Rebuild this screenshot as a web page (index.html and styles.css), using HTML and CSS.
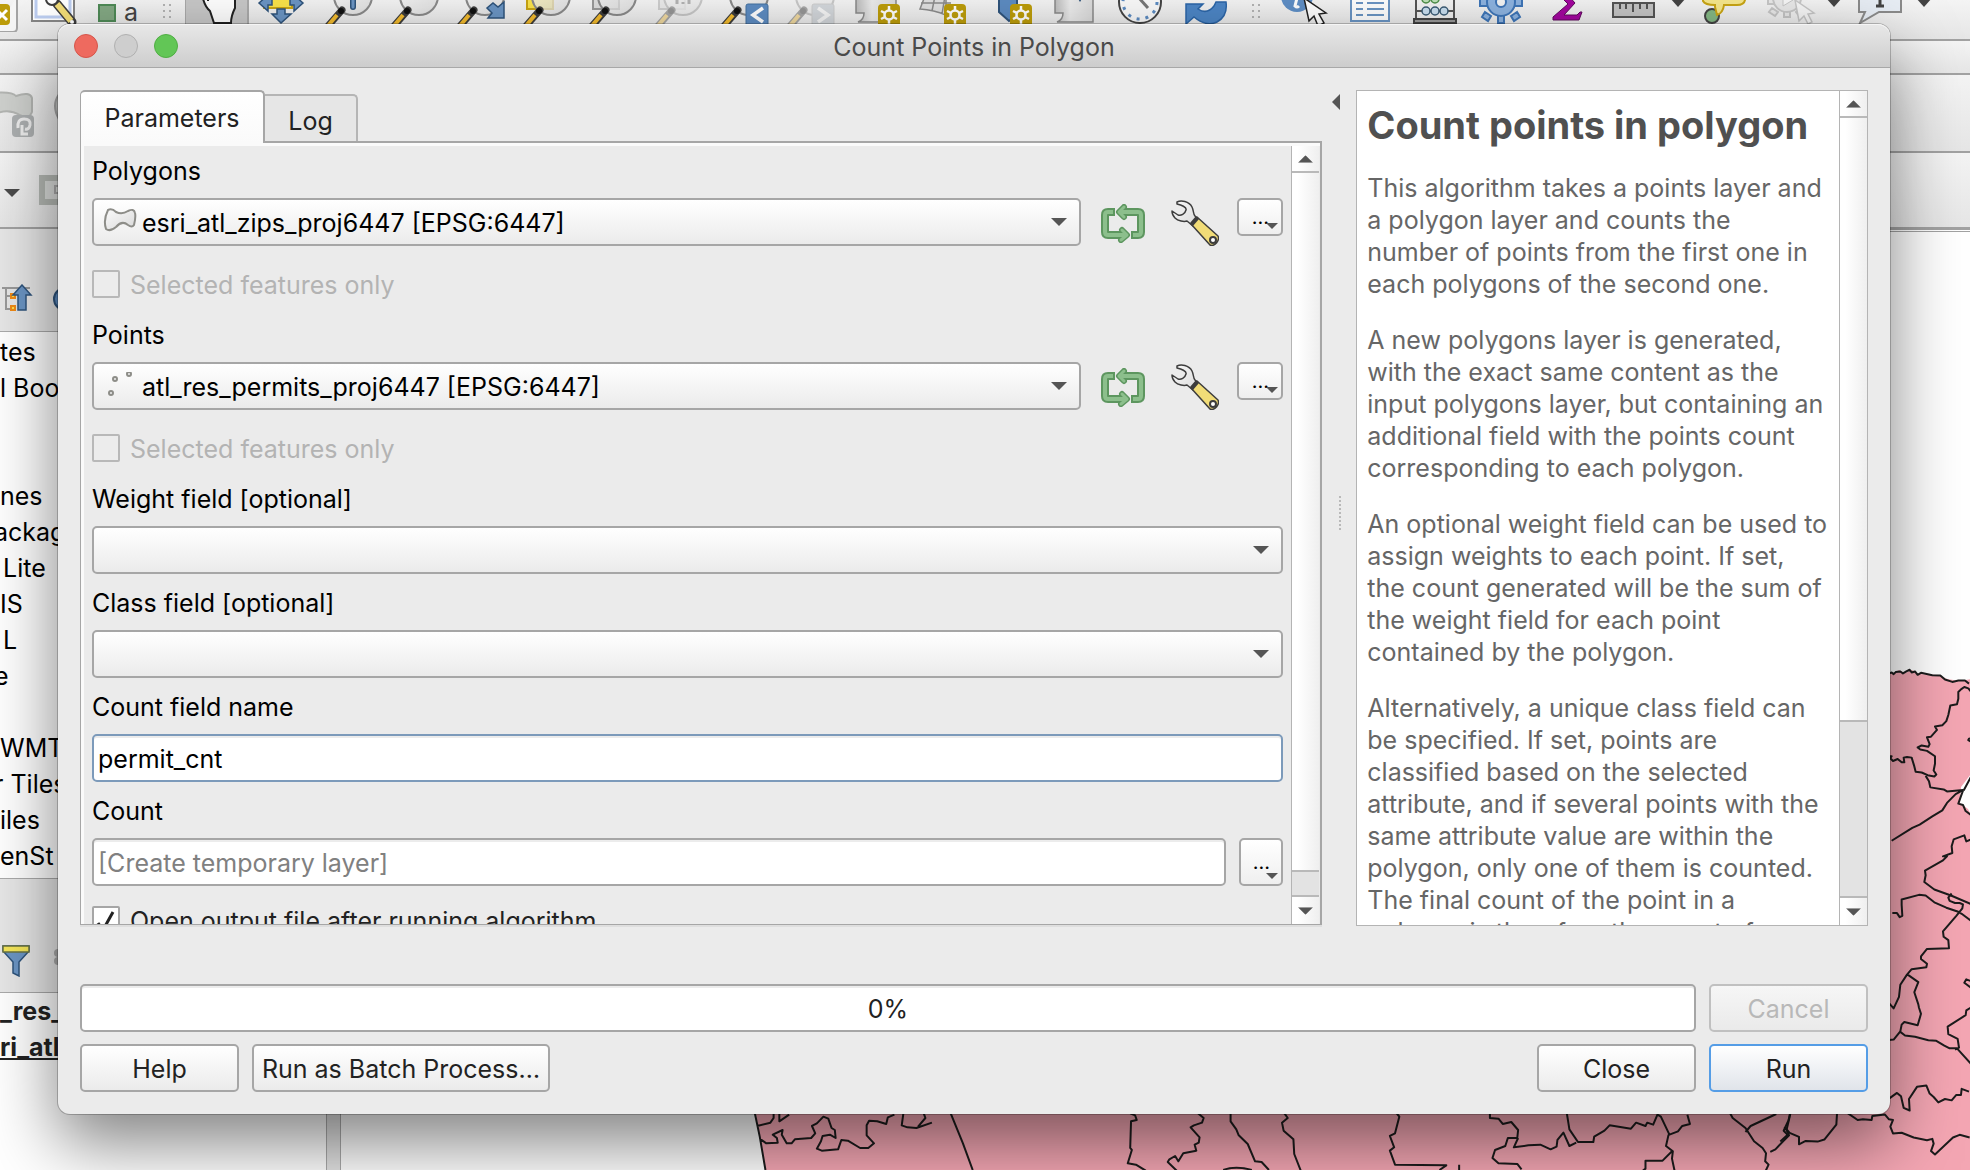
FILE: index.html
```html
<!DOCTYPE html>
<html lang="en">
<head>
<meta charset="utf-8">
<title>Count Points in Polygon</title>
<link rel="stylesheet" href="styles.css">
</head>
<body>
<svg class="defs" aria-hidden="true">
  <defs>
    <linearGradient id="glass" x1="0" y1="0" x2="1" y2="1"><stop offset="0" stop-color="#fafafa"/><stop offset="1" stop-color="#d9d9d9"/></linearGradient>
    <linearGradient id="paper" x1="0" y1="0" x2="1" y2="0"><stop offset="0" stop-color="#bdbdbd"/><stop offset=".4" stop-color="#ececec"/><stop offset="1" stop-color="#dadada"/></linearGradient>
    <symbol id="lens" viewBox="0 0 66 24">
      <circle cx="38" cy="-4" r="19" fill="url(#glass)" fill-opacity=".75" stroke="#8a8a8a" stroke-width="2"/>
      <path d="M13 26L27 10" stroke="#3d3d3d" stroke-width="7" stroke-linecap="round"/>
      <path d="M12 27L22 15" stroke="#f3bb2e" stroke-width="4"/>
      <circle cx="26" cy="11" r="3" fill="#111"/>
    </symbol>
    <symbol id="badge" viewBox="0 0 22 20">
      <rect width="22" height="26" rx="4" fill="#bd9d0a"/>
      <path d="M11 2v18M3 7l16 8M3 15l16-8" stroke="#fff" stroke-width="2.5"/>
      <circle cx="11" cy="11" r="4.5" fill="#bd9d0a" stroke="#fff" stroke-width="2.5"/>
    </symbol>
    <symbol id="wrench" viewBox="0 0 48 46">
      <path d="M6 2C10 0 18 1 21 7c2 4 1 7 3 9l4 5-6 5-6-5c-3 1-9 0-12-3-2-2-3-5-3-7l6 4c3 1 7-1 8-5C16 7 10 5 6 4z" fill="url(#glass)" stroke="#3d3d3d" stroke-width="1.5" stroke-linejoin="round"/>
      <path d="M20 24l6-7 21 19c2 4-3 11-8 9z" fill="#f1dc77" stroke="#3d3d3d" stroke-width="1.5" stroke-linejoin="round"/>
      <path d="M19 23l6-7 3 3-6 7z" fill="#3d3d3d"/>
      <circle cx="42" cy="40" r="3" fill="#fff" stroke="#3d3d3d" stroke-width="2"/>
    </symbol>
    <symbol id="iterate" viewBox="0 0 44 39">
      <g fill="none" stroke-linejoin="round" stroke-linecap="round">
        <path d="M14 8H7q-3 0-3 3v17q0 3 3 3h15M30 31h7q3 0 3-3V11q0-3-3-3H22" stroke="#5d965f" stroke-width="8" stroke-linecap="butt"/>
        <path d="M21 26l5 5-6 5M23 3l-5 5 5 5" stroke="#5d965f" stroke-width="6"/>
        <path d="M12 8H7q-3 0-3 3v17q0 3 3 3h17M32 31h5q3 0 3-3V11q0-3-3-3H20" stroke="#8cbf8c" stroke-width="4" stroke-linecap="butt"/>
        <path d="M21 26l5 5-6 5M23 3l-5 5 5 5" stroke="#8cbf8c" stroke-width="3"/>
      </g>
    </symbol>
    <symbol id="down" viewBox="0 0 16 8"><path d="M0 0h16L8 8z" fill="#555"/></symbol>
    <symbol id="up" viewBox="0 0 16 8"><path d="M0 8h16L8 0z" fill="#555"/></symbol>
    <symbol id="grip" viewBox="0 0 30 24"><path d="M14 4v16M20 4v16" stroke="#b4b4b4" stroke-width="2" stroke-dasharray="2 4"/></symbol>
  </defs>
</svg>

<div class="app">
  <div class="toolbar toolbar-main">
    <svg class="w22" viewBox="0 0 22 32"><path d="M-4 32h17q4 0 4-4V-4" fill="#f6f6f6" stroke="#a5a5a5" stroke-width="2"/><rect x="-12" y="4" width="22" height="21" rx="4" fill="#bd9d0a"/><path d="M-3 10l10 10M7 10L-3 20" stroke="#fff" stroke-width="3"/></svg>
    <svg class="w66" viewBox="0 0 66 24"><path d="M10-4h42v25H10z" fill="#fff" stroke="#858585" stroke-width="2"/><path d="M14-4v21h34V-4" fill="#fff" stroke="#bccdf0" stroke-width="3"/><path d="M35 4L50 22" stroke="#3d3d3d" stroke-width="9" stroke-linecap="round"/><path d="M35 4L49 21" stroke="#f1dc77" stroke-width="6"/><circle cx="30" cy="-1" r="6" fill="#fff" stroke="#3d3d3d" stroke-width="2"/><circle cx="50" cy="22" r="2" fill="#fff"/></svg>
    <span class="style-sample"><i></i><b>a</b></span>
    <svg class="w35" viewBox="0 0 35 24"><use href="#grip" width="30" height="24"/></svg>
    <span class="pressed"><svg class="w62" viewBox="0 0 62 24"><path d="M16-6q2 12 8 17l4 12h17q0-7 4-15V-6z" fill="#fff" stroke="#222" stroke-width="2"/><path d="M22-2v3" stroke="#222" stroke-width="2"/></svg></span>
    <svg class="w66" viewBox="0 0 66 24"><path d="M15-4h28V8H15z" fill="#fae34a" stroke="#c9a514" stroke-width="2"/><path d="M10 3l9-8v4h4v6h-4v6zM54 3l-9-8v4h-4v6h4v6zM32 23l-9-9h5V9h8v5h6z" fill="#6b95c4" stroke="#2f547c" stroke-width="1.5"/></svg>
    <svg class="w66" viewBox="0 0 66 24"><use href="#lens" width="66" height="24"/><path d="M38-4V7" stroke="#2f547c" stroke-width="6" stroke-linecap="round"/><path d="M38-4V7" stroke="#6b95c4" stroke-width="3" stroke-linecap="round"/></svg>
    <svg class="w66" viewBox="0 0 66 24"><use href="#lens" width="66" height="24"/></svg>
    <svg class="w66" viewBox="0 0 66 24"><use href="#lens" width="66" height="24"/><path d="M57 2v16H41l4-5-5-5 6-5 5 4z" fill="#6b95c4" stroke="#2f547c" stroke-width="1.5"/></svg>
    <svg class="w66" viewBox="0 0 66 24"><path d="M14-4h26V9H14z" fill="#fae34a" stroke="#c9a514" stroke-width="2"/><use href="#lens" width="66" height="24"/></svg>
    <svg class="w66" viewBox="0 0 66 24"><path d="M14-4h26V9H14z" fill="#ddd" stroke="#999" stroke-width="2"/><use href="#lens" width="66" height="24"/></svg>
    <svg class="w66 dim" viewBox="0 0 66 24"><path d="M14-4h26V9H14z" fill="#ddd" stroke="#999" stroke-width="2"/><use href="#lens" width="66" height="24"/><path d="M32 0v4M38 2v2M44-2v6" stroke="#555" stroke-width="3"/></svg>
    <svg class="w66" viewBox="0 0 66 24"><use href="#lens" width="66" height="24"/><rect x="35" y="4" width="22" height="24" rx="2" fill="#5d8cc2" stroke="#44719f"/><path d="M52 8l-10 7 10 7" fill="none" stroke="#fff" stroke-width="3.5"/></svg>
    <svg class="w66 dim" viewBox="0 0 66 24"><use href="#lens" width="66" height="24"/><rect x="35" y="4" width="22" height="24" rx="2" fill="#a9b3bd" stroke="#999"/><path d="M41 8l10 7-10 7" fill="none" stroke="#fff" stroke-width="3.5"/></svg>
    <svg class="w66" viewBox="0 0 66 24"><path d="M13-4h40v26H15q6-2 6-9h-8z" fill="url(#paper)" stroke="#8b8b8b" stroke-width="1.5"/><use href="#badge" x="35" y="4" width="22" height="20"/></svg>
    <svg class="w66" viewBox="0 0 66 24"><path d="M16-4L11 9q14 1 26 6V-4zM12 3h30M26-4l-3 15M36-4l-3 18" fill="#e0e0e0" stroke="#8b8b8b" stroke-width="1.5"/><use href="#badge" x="35" y="4" width="22" height="20"/></svg>
    <svg class="w66" viewBox="0 0 66 24"><path d="M24-4h18v19l-8 6-10-9z" fill="#5d8cc2" stroke="#2f547c" stroke-width="2"/><use href="#badge" x="35" y="4" width="22" height="20"/></svg>
    <svg class="w66" viewBox="0 0 66 24"><path d="M14-4h38v26H16q6-2 6-9h-8z" fill="url(#paper)" stroke="#8b8b8b" stroke-width="1.5"/><path d="M36-3h6l-3 5z" fill="#2f547c"/></svg>
    <svg class="w66" viewBox="0 0 66 24"><circle cx="33" cy="2" r="21" fill="#fafafa" stroke="#444" stroke-width="2"/><circle cx="33" cy="2" r="17" fill="none" stroke="#5d8cc2" stroke-width="3" stroke-dasharray="3 6"/><path d="M32-2l9 10" stroke="#777" stroke-width="3"/></svg>
    <svg class="w66" viewBox="0 0 66 24"><path d="M13 24V4h17l-5 5q9 6 16-3l2-4h10q2 14-9 20-11 5-23-5z" fill="#4d86c6" stroke="#2c66a8" stroke-width="1.5"/><path d="M13-1h40" stroke="#7fb0e6" stroke-width="2"/></svg>
    <svg class="w30" viewBox="0 0 30 24"><use href="#grip" width="30" height="24"/></svg>
    <svg class="w66" viewBox="0 0 66 24"><circle cx="28" cy="-4" r="16" fill="#5f8fc6"/><path d="M28-2l-2 8q2 2 4 0" fill="none" stroke="#fff" stroke-width="3"/><path d="M35-2l5 23 5-5 4 10 6-3-5-9 7-1z" fill="#fff" stroke="#222" stroke-width="1.5"/></svg>
    <svg class="w66" viewBox="0 0 66 24"><path d="M16-4h38v25H16z" fill="#fff" stroke="#6b95c4" stroke-width="2"/><path d="M21 3h7M32 3h17M21 9h7M32 9h17M21 15h7M32 15h17" stroke="#6b95c4" stroke-width="2"/></svg>
    <svg class="w66" viewBox="0 0 66 24"><path d="M15-4v23M53-4v23M15 11h38" fill="none" stroke="#555" stroke-width="2"/><path d="M13 19h42v4H13z" fill="#999" stroke="#444" stroke-width="2"/><g fill="#c9dff0" stroke="#3b5b74" stroke-width="1.5"><circle cx="25" cy="11" r="4"/><circle cx="34" cy="11" r="4"/><circle cx="43" cy="11" r="4"/></g><g fill="#bfe3b8" stroke="#4f8f4a" stroke-width="1.5"><circle cx="25" cy="-1" r="4"/><circle cx="34" cy="-1" r="4"/></g></svg>
    <svg class="w66" viewBox="0 0 66 24"><g fill="#8db3e0" stroke="#3f76b8" stroke-width="2"><path d="M13-1h8v7h-8zM47-1h8v7h-8zM31 14h6v9h-6zM18 12l6 4-3 5-6-4zM50 12l-6 4 3 5 6-4z"/><circle cx="34" cy="2" r="14"/></g><circle cx="34" cy="2" r="5" fill="#f4f4f4" stroke="#3f76b8" stroke-width="2"/></svg>
    <svg class="w66" viewBox="0 0 66 24"><path d="M27-4l8 8-15 13v3h26l3-8h-2l-3 3H31L42 3l-8-9" fill="#a3069f" stroke="#5e0a5c"/></svg>
    <svg class="w66" viewBox="0 0 66 24"><path d="M14 3h41v14H14z" fill="#c4c4c4" stroke="#555" stroke-width="2"/><path d="M21 3v6M27 3v6M34 3v9M41 3v6M48 3v6" stroke="#555" stroke-width="2"/></svg>
    <svg class="w26" viewBox="0 0 26 24"><path d="M5-2h16l-8 9z" fill="#444"/></svg>
    <svg class="w66" viewBox="0 0 66 24"><circle cx="21" cy="16" r="7" fill="#84b884" stroke="#444" stroke-width="2"/><path d="M12-4v5q2 4 12 4v2l2 8q6-2 7-10h13q7 0 8-5v-4z" fill="#f7e88c" stroke="#c9a514" stroke-width="2"/></svg>
    <svg class="w66 dim" viewBox="0 0 66 24"><g fill="#ddd" stroke="#888" stroke-width="2"><path d="M11-3h8v7h-8zM27 10h6v7h-6zM15 8l6 4-3 4-6-4zM45 8l-6 4 3 4 6-4z"/><circle cx="30" cy="-2" r="14"/></g><path d="M26-4l10 4-10 6z" fill="#fff" stroke="#888"/><path d="M38 0l4 21 5-5 4 8 4-2-4-8 6-1z" fill="#fff" stroke="#888" stroke-width="1.5"/></svg>
    <svg class="w24" viewBox="0 0 24 24"><path d="M3-2h16l-8 9z" fill="#444"/></svg>
    <svg class="w66" viewBox="0 0 66 24"><path d="M12-4h42v16H32L13 23l5-11h-6z" fill="#e8eef5" stroke="#8b8b8b" stroke-width="2"/><path d="M33-4V5M29 6h8" stroke="#444" stroke-width="3"/></svg>
    <svg class="w22" viewBox="0 0 22 24"><path d="M3-2h16l-8 9z" fill="#444"/></svg>
  </div>
  <div class="toolbar toolbar-thin"></div>
  <div class="toolbar toolbar-edit">
    <svg class="w58" viewBox="0 0 58 76"><path d="M-8 18q20-2 24 3 14-5 16 2v14q-3 8-12 3-14-8-28 1z" fill="#cfd1ce" stroke="#b4b6b3" stroke-width="2"/><rect x="12" y="40" width="22" height="22" rx="4" fill="#adb0b1"/><path d="M18 53q-1-9 6-9t6 6q-1 5-5 4M22 50v9h6" fill="none" stroke="#eee" stroke-width="3"/><path d="M60 18q-10 12 0 28" fill="#c4c6c4" stroke="#a5a5a5" stroke-width="2"/></svg>
  </div>
  <div class="toolbar toolbar-snap">
    <svg class="w58" viewBox="0 0 58 74"><path d="M4 36h16l-8 8z" fill="#4b4b4b"/><path d="M42 25h20v24H42z" fill="#dcdedc" stroke="#b6bab5" stroke-width="6"/><path d="M62 33h-7v7h7" fill="none" stroke="#aaa" stroke-width="2"/></svg>
  </div>
  <div class="workspace">
    <div class="dock">
      <div class="dock-head browser-head">
        <svg class="w58" viewBox="0 0 58 30"><path d="M2 4h28M6 5v20h6M6 12h5" fill="none" stroke="#999" stroke-width="2"/><path d="M11 10h4v4h-4zM11 22h4v4h-4z" fill="#fbe04c" stroke="#f08a16" stroke-width="2"/><path d="M22 1l9 10h-5v15h-8V11h-5z" fill="#6b95c4" stroke="#2f547c" stroke-width="1.5"/><circle cx="65" cy="15" r="11" fill="#5d8cc2" stroke="#2f547c" stroke-width="2"/></svg>
      </div>
      <ul class="tree">
        <li>tes</li><li>l Boo</li><li></li><li></li><li>nes</li><li class="cut">ackag</li><li class="in">Lite</li><li>IS</li><li class="in">L</li><li class="cut">e</li><li></li><li>WMT</li><li class="cut">r Tiles</li><li>iles</li><li>enSt</li>
      </ul>
      <div class="dock-head layers-head">
        <svg class="w58" viewBox="0 0 58 32"><path d="M3 1h26v5L19 17v14l-6-3V17L3 6z" fill="#6b95c4" stroke="#2f547c" stroke-width="1.5"/><path d="M3 1h26v6H3z" fill="#f5e65a" stroke="#6a7340" stroke-width="1.5"/><circle cx="58" cy="8" r="4" fill="#aaa"/><circle cx="58" cy="16" r="4" fill="#aaa"/></svg>
      </div>
      <ul class="tree layers"><li>_res_</li><li class="active">ri_atl</li></ul>
    </div>
    <div class="dock-split"></div>
    <div class="canvas">
      <svg class="map" aria-hidden="true">
        <g transform="translate(-340 -232)">
          <path d="M1880 673l12 0 6-3 6 3 7-3 7 4 20 1 8 4 13 2 11-2V1190H768L755 1114 740 1050 1400 800z" fill="#f4a6b3"/>
          <path d="M1970 774l-10 13-1 16 8 6 3 6z" fill="#fff"/>
          <g class="borders">
            <g transform="translate(1780 640) scale(.3333 .338)">
              <path d="M320 101l12-5 6 5 6-6 14-2 8 6 10-6 10-5 6 8 10-3 8 10 10-6 34 7 24 1 14 12 22 7 18-4 20 0 12 9"/>
              <path d="M570 153l-8-10-12-4-10 7-8 8 0 20-4 16-20 4-6 28-6 18-12 12-22 4 6 10-18 20-12 2 8 20-4 8-20-4-12 6 8 6 20 4 24 16 0 22-4 20 8 12-6 6-20-4-18-8-18-2-4-16-8-26-14-2-10 2 2 14-8 0-12-10-14 6-8-8 4-6-22 0"/>
              <path d="M434 402l10 16 4 18 40 6 10 6 48-4-22 12-26 26-14 22-30 18-38 24-22 10-62 38"/>
              <path d="M548 445l24-44M546 446l-6 16-8 22 14 4 8 18 16 12M572 290l-8 2-2 4 10 6M570 590l-14 6-6-18-32 12-6 20 2 20-28 10 12 0-12 12-54 30 2 14-4 20 30 22 50 18 62 26"/>
              <path d="M572 832l-30-22-10-6-36-12-36-16-26-20-20-2-52 14 0 16 2 32-8 4-8-12-14 0M512 750l-10 12 4 10 16 6 14 0 10 4-2 12-18 22-40 46 2 16 14 10 2 24-66 2-18 22 0 8 18 14-2 10-44 6-14 16-20 30-4 36-16 34-18-20M380 990l32 22-12 30 12 36 2 10 6 18-10 34-40-10-8 8-4 20-20 24-20 2M356 1158l16 12 30 4 40 10 24 2 24 14 16 8 22 0 44 48M522 1212l12-6-4-26-28-14-2-22 54-34 2-14 16-10M572 1010l-16-6-6 10 22 16"/>
              <path d="M320 1360l28-20 12 10 8 34 18 8-2-34 24-36 28-4 10 24 12 10 14 16 20-10 20 4 14-16 14 0 2-18 22 8M200 1400l30 20 16-2 26 2 2-12 38-4 12 14 12 2-8 20 8 20 26-2 36 14 40 8 16-4 4 14-8 22 12 10 54-50 20-8 30 8M28 1402l-6 20-14 30 12 12-22 20M10 1440l16 18 28 12 0 22 20-10 36 2 20-6 36-44 2-32"/>
            </g>
            <g transform="translate(700 1060) scale(.408 .3333)">
              <path d="M132 160l12 70 14 100M612 160l30 90 24 80M138 198l32-10 8-14 0-14M192 160v24l24-20M144 236l16 14 28-2-2-14-10-10 24-14-2 14 12 26 12 0 8-12 40-4 10-14-8-22 12-8 16-20 12 6 8 28 8 6 2 24-14-10-18 4-4 16-10 22 12 6 40-4 8-28 16 2 30 22 20 0 14-14-18-24 0-30 6-14 20 2 22 8 4-20 16-8M496 160l-4 36 14 6 22 2 38-16M546 160l4 14-18 26"/>
              <path d="M1052 160l12 6 4 14-14 4-2 80 4 6-10 40 20 4 24 18M1218 160l14 14-4 14-20 8-8 6 22 30-2 16-10 6 4 18-32 8-12 24-8-16-14 10-4 8 22 26M1298 160v24l14 24 6 18 22 26 18 52 16 2 18 24M1430 160l8 14-14 14 4 24 24 26 2 44 16 50M1280 330q30-14 70 0"/>
            </g>
            <g transform="translate(1300 1000) scale(.4274 .3333)">
              <path d="M224 340l6 10-10 50-12 8 10 34-10 10 12 42 120 2-16 14M370 494v20M442 340v14l20 2 10 16 20-6 16 24-2 24-22 0-6 24-24 12-6 24 14 16 44 2 10 16M508 414l-10 28 34-6 28-2 24 14 14-8 2-20 14-22 14 40 16-10M622 340l6 48 20 38 36 0 2-16 24-18 12-16 50 10 12-18 22 10 4-10 14 6 10-30 8 6 20 54 20-10 10-16 18-6-6-28M860 404l-6 34 16 16-2 22 6 36M868 454l-22 28h-40l0 24-10 10M1004 340l6 14 30 30 20 40 20 20 8 16-2 24 8 10-8 22M1040 396l12-18 60-36M1144 340l-2 18-6 32 6 16-14 18-18 24-12 8"/>
            </g>
          </g>
        </g>
      </svg>
    </div>
  </div>
</div>

<main class="dialog" role="dialog" aria-labelledby="title">
  <header class="titlebar">
    <div class="lights"><button class="light red" aria-label="Close window"></button><button class="light gray" aria-label="Minimise window" disabled></button><button class="light green" aria-label="Zoom window"></button></div>
    <h1 id="title">Count Points in Polygon</h1>
  </header>
  <div class="dialog-body">
    <div class="panes">
      <section class="left">
        <div class="tabs" role="tablist">
          <button class="tab selected" role="tab" aria-selected="true">Parameters</button>
          <button class="tab" role="tab" aria-selected="false">Log</button>
        </div>
        <div class="pane">
          <form class="params" id="params">
            <label class="caption" for="polygons">Polygons</label>
            <div class="row">
              <div class="combo has-icon">
                <select id="polygons"><option>esri_atl_zips_proj6447 [EPSG:6447]</option></select>
                <svg class="layer-icon" viewBox="0 0 32 24"><path d="M4 2q4-2 8 2 6 3 12-1 6-3 7 2 1 4-1 12-2 3-6 0-6-5-12 2-6 5-10 2-3-9 2-19z" fill="url(#glass)" stroke="#8d8d88" stroke-width="2"/></svg>
                <svg class="arrow" viewBox="0 0 16 8"><use href="#down"/></svg>
              </div>
              <button type="button" class="tool" aria-label="Iterate over this layer"><svg class="iterate" viewBox="0 0 44 39"><use href="#iterate"/></svg></button>
              <button type="button" class="tool wide" aria-label="Advanced options"><svg class="wrench" viewBox="0 0 48 46"><use href="#wrench"/></svg></button>
              <button type="button" class="more" aria-label="Browse">…<svg class="mini" viewBox="0 0 16 8"><use href="#down"/></svg></button>
            </div>
            <label class="check off"><input type="checkbox" disabled><span>Selected features only</span></label>
            <label class="caption" for="points">Points</label>
            <div class="row">
              <div class="combo has-icon">
                <select id="points"><option>atl_res_permits_proj6447 [EPSG:6447]</option></select>
                <svg class="layer-icon" viewBox="0 0 32 24"><g fill="#eee" stroke="#8d8d88" stroke-width="2"><circle cx="7" cy="21" r="2"/><circle cx="11" cy="7" r="2"/><circle cx="25" cy="2" r="2"/></g></svg>
                <svg class="arrow" viewBox="0 0 16 8"><use href="#down"/></svg>
              </div>
              <button type="button" class="tool" aria-label="Iterate over this layer"><svg class="iterate" viewBox="0 0 44 39"><use href="#iterate"/></svg></button>
              <button type="button" class="tool wide" aria-label="Advanced options"><svg class="wrench" viewBox="0 0 48 46"><use href="#wrench"/></svg></button>
              <button type="button" class="more" aria-label="Browse">…<svg class="mini" viewBox="0 0 16 8"><use href="#down"/></svg></button>
            </div>
            <label class="check off"><input type="checkbox" disabled><span>Selected features only</span></label>
            <label class="caption" for="weight">Weight field [optional]</label>
            <div class="combo"><select id="weight"><option></option></select><svg class="arrow" viewBox="0 0 16 8"><use href="#down"/></svg></div>
            <label class="caption" for="class">Class field [optional]</label>
            <div class="combo"><select id="class"><option></option></select><svg class="arrow" viewBox="0 0 16 8"><use href="#down"/></svg></div>
            <label class="caption" for="name">Count field name</label>
            <input class="text focus" id="name" type="text" value="permit_cnt">
            <label class="caption" for="count">Count</label>
            <div class="row">
              <input class="text" id="count" type="text" placeholder="[Create temporary layer]">
              <button type="button" class="more tall" aria-label="Browse">…<svg class="mini" viewBox="0 0 16 8"><use href="#down"/></svg></button>
            </div>
            <label class="check last"><input type="checkbox" checked><span>Open output file after running algorithm</span><svg class="tick" viewBox="0 0 28 28"><path d="M6 17l5 7L21 6" fill="none" stroke="#222" stroke-width="3"/></svg></label>
          </form>
          <div class="scroll left-scroll">
            <span class="step"><svg viewBox="0 0 16 8"><use href="#up"/></svg></span>
            <span class="thumb"></span><span class="trough"></span>
            <span class="step end"><svg viewBox="0 0 16 8"><use href="#down"/></svg></span>
          </div>
        </div>
      </section>
      <div class="splitter">
        <svg class="collapse" viewBox="0 0 8 16"><path d="M8 0v16L0 8z" fill="#555"/></svg>
        <i class="dots"></i>
      </div>
      <article class="help">
        <div class="help-text">
          <h2>Count points in polygon</h2>
          <p>This algorithm takes a points layer and<br>a polygon layer and counts the<br>number of points from the first one in<br>each polygons of the second one.</p>
          <p>A new polygons layer is generated,<br>with the exact same content as the<br>input polygons layer, but containing an<br>additional field with the points count<br>corresponding to each polygon.</p>
          <p>An optional weight field can be used to<br>assign weights to each point. If set,<br>the count generated will be the sum of<br>the weight field for each point<br>contained by the polygon.</p>
          <p>Alternatively, a unique class field can<br>be specified. If set, points are<br>classified based on the selected<br>attribute, and if several points with the<br>same attribute value are within the<br>polygon, only one of them is counted.<br>The final count of the point in a<br>polygon is therefore the count of</p>
        </div>
        <div class="scroll help-scroll">
          <span class="step"><svg viewBox="0 0 16 8"><use href="#up"/></svg></span>
          <span class="thumb"></span><span class="trough"></span>
          <span class="step end"><svg viewBox="0 0 16 8"><use href="#down"/></svg></span>
        </div>
      </article>
    </div>
    <div class="progress-row">
      <div class="progress" role="progressbar" aria-valuenow="0" aria-valuemin="0" aria-valuemax="100">0%</div>
      <button class="btn" disabled>Cancel</button>
    </div>
    <div class="actions">
      <button class="btn">Help</button>
      <button class="btn batch">Run as Batch Process…</button>
      <span class="spacer"></span>
      <button class="btn">Close</button>
      <button class="btn primary">Run</button>
    </div>
  </div>
</main>
</body>
</html>
```
FILE: styles.css
```css
* { box-sizing: border-box; }

body {
  margin: 0;
  height: 100vh;
  overflow: hidden;
  position: relative;
  font: 25px/32px Inter, "Liberation Sans", sans-serif;
  color: #000;
  background: #ececec;
}

button, input, select { font: inherit; color: inherit; margin: 0; }
svg { display: block; flex: none; }
.defs { position: absolute; width: 0; height: 0; }

/* Main window behind the dialog */
.app { height: 100vh; display: flex; flex-direction: column; overflow: hidden; }
.toolbar {
  display: flex;
  align-items: center;
  flex: none;
  border-bottom: 2px solid #a2a2a2;
  background: linear-gradient(#f4f4f4, #e6e6e6);
  overflow: hidden;
}
.toolbar-main { height: 41px; align-items: flex-start; }
.toolbar-thin { height: 34px; }
.toolbar-edit { height: 78px; }
.toolbar-snap { height: 76px; }
.w22 { width: 22px; } .w24 { width: 24px; } .w26 { width: 26px; } .w30 { width: 30px; }
.w35 { width: 35px; } .w58 { width: 58px; } .w62 { width: 62px; } .w66 { width: 66px; }
.dim { opacity: .4; }
.pressed { width: 64px; height: 41px; background: #c8c8c8; border: solid #aaa; border-width: 0 2px 0 1px; }
.style-sample { width: 62px; display: flex; align-items: flex-start; padding-left: 10px; gap: 8px; }
.style-sample i { width: 18px; height: 18px; margin-top: 4px; background: #84a984; border: 2px solid #4f8a57; }
.style-sample b { font-weight: 400; line-height: 24px; color: #444; }

.workspace { flex: 1; display: flex; min-height: 0; }
.dock { width: 326px; display: flex; flex-direction: column; background: #fff; overflow: hidden; }
.dock-head { flex: none; background: #e7e7e7; border-bottom: 1px solid #aaa; }
.browser-head { height: 103px; padding-top: 55px; }
.layers-head { height: 115px; padding-top: 66px; border-top: 1px solid #aaa; }
.tree { list-style: none; margin: 0; padding: 2px 0 0; flex: none; height: 546px; line-height: 36px; white-space: nowrap; }
.tree li { height: 36px; }
.tree .in { padding-left: 3px; }
.tree .cut { margin-left: -6px; }
.tree.layers { flex: 1; height: auto; padding: 0; font-weight: 700; color: #222; }
.layers .active { text-decoration: underline; }
.dock-split { width: 15px; background: #e3e3e3; border: solid #aaa; border-width: 0 1px; }
.canvas { flex: 1; background: #fff; border-top: 3px double #a2a2a2; min-width: 0; }
.map { width: 100%; height: 100%; }
.borders path { fill: none; stroke: #1c1c1c; stroke-width: 2px; stroke-linejoin: round; vector-effect: non-scaling-stroke; }

/* Dialog window */
.dialog {
  position: absolute;
  inset: 24px 80px 56px 58px;
  display: flex;
  flex-direction: column;
  background: #ebebeb;
  border-radius: 12px;
  box-shadow: 0 0 0 1px rgba(0, 0, 0, .22), 0 28px 68px rgba(0, 0, 0, .5);
}
.titlebar {
  height: 44px;
  flex: none;
  display: grid;
  grid-template-columns: 1fr auto 1fr;
  align-items: center;
  border-bottom: 1px solid #a8a8a8;
  border-radius: 12px 12px 0 0;
  background: linear-gradient(#e8e8e8, #cdcdcd);
  box-shadow: inset 0 1px #f5f5f5;
}
.titlebar h1 { margin: 0; padding-top: 2px; font-size: 25px; font-weight: 400; color: #4a4a4a; }
.lights { display: flex; gap: 16px; padding-left: 16px; }
.light { width: 24px; height: 24px; padding: 0; border-radius: 50%; border: 1px solid; }
.red { background: #ee6a5f; border-color: #d5554a; }
.gray { background: #cecece; border-color: #b0b0b0; }
.green { background: #62c656; border-color: #4fae43; }

.dialog-body { flex: 1; min-height: 0; display: flex; flex-direction: column; padding: 22px; }
.panes { flex: 1; min-height: 0; display: flex; margin-bottom: 58px; }
.left { flex: 1243 1 0; min-width: 0; display: flex; flex-direction: column; padding-bottom: 1px; }
.tabs { display: flex; align-items: flex-end; height: 51px; flex: none; }
.tab {
  height: 47px;
  width: 93px;
  padding: 4px 0 0;
  color: #222;
  background: #e6e6e6;
  border: 2px solid #b5b5b5;
  border-width: 2px 2px 0 0;
  border-radius: 0 5px 0 0;
}
.tab.selected {
  position: relative;
  width: 185px;
  height: 53px;
  margin-bottom: -2px;
  padding: 0;
  background: linear-gradient(#fff, #fafafa);
  border: solid #a6a6a6;
  border-width: 2px 2px 0 1px;
  border-radius: 5px 5px 0 0;
}
.pane {
  flex: 1;
  min-height: 0;
  display: flex;
  border: solid #a6a6a6;
  border-width: 2px 2px 1px 1px;
  box-shadow: inset 3px 3px #fafafa, 0 2px #dedede;
}
.params { flex: 1; min-width: 0; padding: 11px 8px 0 11px; overflow: hidden; }
.caption { display: block; line-height: 34px; margin-bottom: 10px; }
.row { display: flex; align-items: flex-start; }
.combo { position: relative; flex: 1; margin-bottom: 12px; }
.row .combo { margin-bottom: 0; }
.combo select {
  display: block;
  width: 100%;
  height: 48px;
  padding: 2px 44px 0 8px;
  appearance: none;
  border: 2px solid #a6a6a6;
  border-radius: 5px;
  background: linear-gradient(#fff, #ebebeb);
}
.combo.has-icon select { padding-left: 48px; }
.layer-icon { position: absolute; left: 11px; top: 10px; width: 34px; height: 24px; }
.arrow { position: absolute; right: 14px; top: 20px; width: 16px; height: 8px; }
.tool { width: 44px; height: 50px; margin-left: 20px; padding: 0; border: 0; background: none; display: flex; align-items: center; }
.row .tool { margin-bottom: -2px; }
.tool.wide { width: 48px; margin-left: 26px; }
.iterate { width: 44px; height: 39px; }
.wrench { width: 48px; height: 46px; }
.more {
  position: relative;
  width: 46px;
  height: 38px;
  margin-left: 18px;
  padding: 0;
  line-height: 28px;
  font-size: 20px;
  border: 2px solid #a6a6a6;
  border-radius: 5px;
  background: linear-gradient(#fff, #efefef);
}
.more.tall { height: 48px; margin-left: 13px; }
.mini { position: absolute; right: 3px; bottom: 5px; width: 12px; height: 6px; }
.check { position: relative; display: flex; align-items: center; height: 32px; margin: 22px 0 18px; gap: 10px; line-height: 34px; color: #222; }
.check span { padding-top: 2px; }
.check input { appearance: none; width: 28px; height: 28px; border: 2px solid #a6a6a6; border-radius: 2px; background: #fff; }
.check.off { color: #b3b3b3; }
.check.off input { background: #ececec; border-color: #b8b8b8; }
.check.last { margin: 18px 0 0; }
.tick { position: absolute; left: 0; top: 2px; width: 28px; height: 28px; }
.text {
  display: block;
  width: 100%;
  min-width: 0;
  height: 48px;
  padding: 1px 4px 0;
  border: 2px solid #a6a6a6;
  border-radius: 5px;
  background: #fff;
  box-shadow: inset 0 2px #ececec;
  outline: none;
}
.text::placeholder { color: #808080; opacity: 1; }
.text.focus { border-color: #7c9aba; margin-bottom: 12px; }

/* Scroll bars */
.scroll { width: 28px; flex: none; display: flex; flex-direction: column; border-left: 1px solid #b4b4b4; background: linear-gradient(90deg, #fff 20%, #efefef); }
.left-scroll { margin: 3px 1px 0 0; }
.step { height: 27px; flex: none; display: flex; justify-content: center; align-items: center; border-bottom: 2px solid #b9b9b9; }
.step svg { width: 15px; height: 8px; }
.step.end { border: 0; }
.thumb { flex: 702 1 0; }
.trough { flex: 23 0 0; background: #e3e3e3; border: solid #b9b9b9; border-width: 2px 0; }
.help-scroll .thumb { flex-grow: 604; }
.help-scroll .trough { flex-grow: 175; }

.splitter { width: 34px; flex: none; display: flex; flex-direction: column; align-items: flex-start; padding: 4px 0 0 10px; }
.collapse { width: 8px; height: 16px; }
.dots { width: 4px; height: 34px; margin: 386px 0 0 5px; border: dotted #b9b9b9; border-width: 0 2px 0 0; }

.help { flex: 510 1 0; min-width: 0; display: flex; border: 1px solid #b4b4b4; background: #fff; }
.help-text { flex: 1; min-width: 0; padding: 14px 0 0 10px; overflow: hidden; white-space: nowrap; color: #666; }
.help h2 { margin: 0 0 27px; font-size: 38px; line-height: 40px; font-weight: 700; color: #505050; }
.help p { margin: 0 0 24px; }

/* Footer */
.progress-row, .actions { display: flex; gap: 13px; flex: none; }
.progress-row { margin-bottom: 12px; }
.progress {
  flex: 1;
  height: 48px;
  line-height: 46px;
  text-align: center;
  color: #222;
  border: 2px solid #a6a6a6;
  border-radius: 5px;
  background: #fff;
  box-shadow: inset 0 2px #ececec;
}
.btn {
  width: 159px;
  height: 48px;
  padding: 2px 0 0;
  color: #222;
  border: 2px solid #a6a6a6;
  border-radius: 5px;
  background: linear-gradient(#fff, #ebebeb);
}
.btn:disabled { color: #b8b8b8; border-color: #c0c0c0; background: linear-gradient(#f6f6f6, #eaeaea); }
.batch { width: 298px; }
.spacer { flex: 1; }
.primary { border-color: #559de6; background: linear-gradient(#fff, #e0e4ea); }
```
